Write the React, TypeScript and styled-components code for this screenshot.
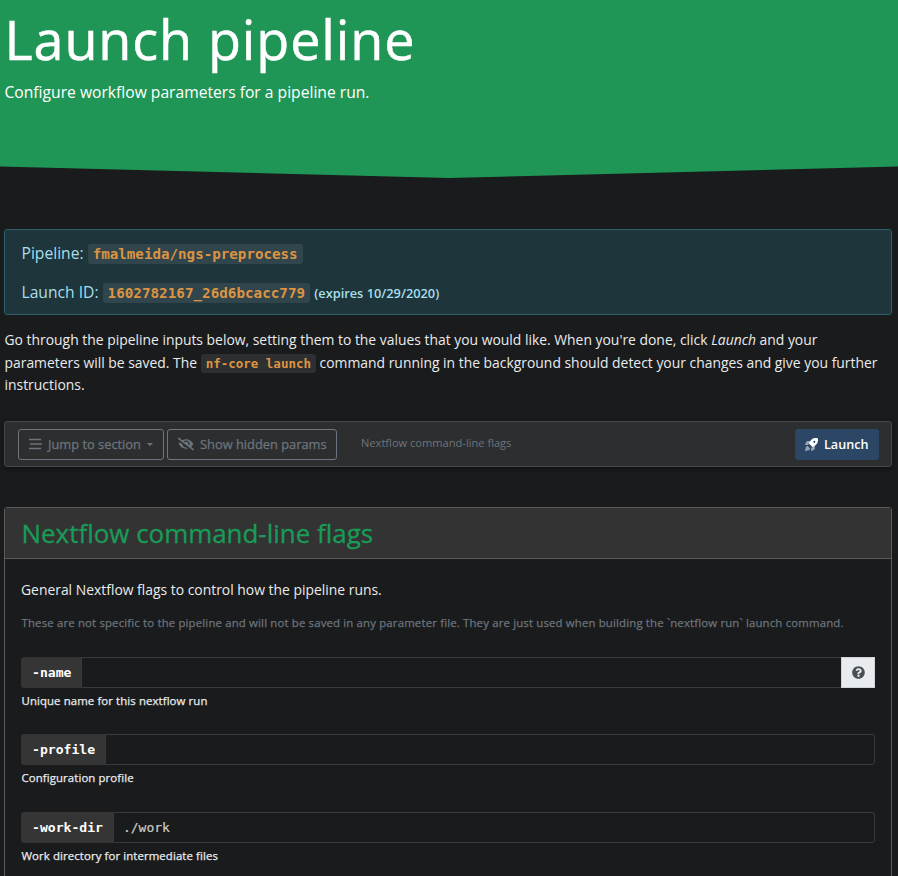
import React from 'react';
import styled, { createGlobalStyle } from 'styled-components';
import { FaEyeSlash, FaQuestionCircle } from 'react-icons/fa';

const sans = `'Open Sans', 'Noto Sans', sans-serif`;
const mono = `'DejaVu Sans Mono', 'Liberation Mono', monospace`;

const GlobalStyle = createGlobalStyle`
  *, *::before, *::after { box-sizing: border-box; }
  html, body { margin: 0; background: #1a1b1c; }
  body {
    height: 876px;
    overflow: hidden;
    font-family: ${sans};
    font-size: 13.9px;
    line-height: 22.5px;
    color: #e9ebed;
  }
  p, h1, h2 { margin: 0; font-weight: 400; }
`;

const Hero = styled.header`
  height: 178px;
  padding: 0 4.5px;
  background: #1f9655;
  color: #fff;
  clip-path: polygon(0 0, 100% 0, 100% 166.5px, 50% 178px, 0 166.5px);
`;

const Title = styled.h1`
  height: 80px;
  font-size: 54px;
  line-height: 78px;
  letter-spacing: 0.85px;
  -webkit-text-stroke: 0.5px currentColor;
  white-space: nowrap;
`;

const Lead = styled.p`
  font-size: 15.65px;
  line-height: 24px;
`;

const Main = styled.main`
  display: flex;
  flex-direction: column;
  padding: 51px 6px 0 4px;
`;

const InfoAlert = styled.section`
  display: flex;
  flex-direction: column;
  gap: 15px;
  height: 86px;
  padding: 11px 16.5px;
  border: 1px solid #2b616b;
  border-radius: 3px;
  background: #1e353b;
  color: #a7dfeb;
`;

const InfoLine = styled.p`
  font-size: 15.65px;
  line-height: 24px;
  white-space: nowrap;
`;

const Code = styled.code<{ $size: number }>`
  padding: 2px 5px;
  border-radius: 3px;
  background: rgba(222, 226, 230, 0.1);
  color: #dc9442;
  font: 700 ${(p) => p.$size}px ${mono};
`;

const Expiry = styled.small`
  font-size: 12.8px;
  font-weight: 600;
`;

const Intro = styled.p`
  margin-top: 14px;
  padding-left: 0.5px;
  white-space: nowrap;
`;

const Toolbar = styled.nav`
  display: flex;
  align-items: center;
  height: 46px;
  margin-top: 24px;
  padding: 1px 12px 0 13px;
  border: 1px solid #46484a;
  border-radius: 3px;
  background: #2d2e30;
  box-shadow: 0 2px 4px rgba(0, 0, 0, 0.4);
`;

const Button = styled.button<{ $primary?: boolean; $width: number }>`
  display: flex;
  align-items: center;
  width: ${(p) => p.$width}px;
  height: 31px;
  margin-right: 3px;
  padding: 0 9px;
  border: 1px solid ${(p) => (p.$primary ? '#2c4766' : '#6c7680')};
  border-radius: 3px;
  background: ${(p) => (p.$primary ? '#2c4766' : 'transparent')};
  color: ${(p) => (p.$primary ? '#fff' : '#6c757d')};
  font: ${(p) => (p.$primary ? '600 12.6px' : '400 12.85px')} ${sans};
  -webkit-text-stroke: ${(p) => (p.$primary ? 0 : 0.25)}px currentColor;
  white-space: nowrap;

  svg { flex: none; margin-right: 6px; }
  &:last-child { margin: 0 0 0 auto; }
`;

const HiddenIcon = styled(FaEyeSlash)`
  margin-left: 1px;
`;

const Caret = styled.span`
  margin-left: 6px;
  border: 3px solid transparent;
  border-top-color: currentColor;
  border-bottom: 0;
`;

const CurrentSection = styled.span`
  margin: -2px 0 0 21px;
  color: #6c757d;
  font-size: 11.1px;
`;

const Card = styled.section`
  height: 420px;
  margin-top: 40px;
  border: 1px solid #5a5b5c;
  border-radius: 3px;
`;

const CardTitle = styled.h2`
  height: 51px;
  padding: 0 16.5px;
  border-bottom: 1px solid #5a5b5c;
  background: #333;
  color: #1a9b57;
  font-size: 25.95px;
  line-height: 51px;
  -webkit-text-stroke: 0.3px currentColor;
`;

const CardBody = styled.div`
  padding: 20px 16px;
`;

const Muted = styled.p`
  margin: 11px 0 22px;
  padding-left: 0.5px;
  color: #6c757d;
  font-size: 11.4px;
  letter-spacing: 0.16px;
  -webkit-text-stroke: 0.25px currentColor;
  white-space: nowrap;
`;

const Field = styled.div`
  height: 77.5px;
`;

const InputGroup = styled.label`
  display: flex;
  height: 31px;
`;

const Flag = styled.span`
  display: flex;
  align-items: center;
  padding: 0 10px 0 11px;
  border-radius: 3px 0 0 3px;
  background: #353535;
  color: #fff;
  font: 700 13.1px ${mono};
`;

const Input = styled.input<{ $joined: boolean }>`
  flex: 1;
  min-width: 0;
  padding: 0 9px;
  border: 1px solid #343b43;
  border-right-width: ${(p) => (p.$joined ? 0 : 1)}px;
  border-radius: ${(p) => (p.$joined ? '0' : '0 3px 3px 0')};
  outline: 0;
  background: transparent;
  color: #cfcdc4;
  font: 13px ${mono};
  -webkit-text-stroke: 0.2px currentColor;
`;

const HelpButton = styled.button`
  display: grid;
  place-items: center;
  width: 34px;
  padding: 0;
  border: 1px solid #ced4da;
  background: #e9ecef;
  color: #495057;
`;

const HelpText = styled.p`
  margin-top: 4px;
  padding-left: 0.5px;
  font-size: 11.4px;
  letter-spacing: 0.1px;
  line-height: 18px;
  -webkit-text-stroke: 0.25px currentColor;
`;

const StreamIcon = () => (
  <svg width="14" height="12" viewBox="0 0 14 12" stroke="currentColor" strokeWidth="1.4">
    <path d="M1 1.5h12M2 6h12M1 10.5h12" />
  </svg>
);

const RocketIcon = () => (
  <svg width="13" height="13" viewBox="0 0 512 512" fill="currentColor">
    <path
      fillRule="evenodd"
      d="M505 19c-1-6-6-11-12-12-132-28-212 14-284 113l-64 91 156 156 91-64c99-72 141-152 113-284zM368 192a40 40 0 1 1 0-80 40 40 0 0 1 0 80z"
    />
    <path
      opacity=".5"
      d="M209 120H95c-14 0-31 10-38 23L4 248c-7 13 0 24 14 24h100zM392 303v114c0 14-10 31-23 38l-105 53c-13 7-24 0-24-14V394zM112 320c-40-3-74 20-83 60-9 41-29 90-29 132 42 0 90-18 132-28 40-10 64-42 60-84z"
    />
  </svg>
);

const fields = [
  { flag: '-name', value: '', help: 'Unique name for this nextflow run', info: true },
  { flag: '-profile', value: '', help: 'Configuration profile', info: false },
  { flag: '-work-dir', value: './work', help: 'Work directory for intermediate files', info: false },
];

export default function App() {
  return (
    <>
      <GlobalStyle />
      <Hero>
        <Title>Launch pipeline</Title>
        <Lead>Configure workflow parameters for a pipeline run.</Lead>
      </Hero>
      <Main>
        <InfoAlert>
          <InfoLine>
            Pipeline: <Code $size={14.2}>fmalmeida/ngs-preprocess</Code>
          </InfoLine>
          <InfoLine>
            Launch ID: <Code $size={14.27}>1602782167_26d6bcacc779</Code>{' '}
            <Expiry>(expires 10/29/2020)</Expiry>
          </InfoLine>
        </InfoAlert>
        <Intro>
          Go through the pipeline inputs below, setting them to the values that you would like. When
          you're done, click <em>Launch</em> and your
          <br />
          parameters will be saved. The <Code $size={12.5}>nf-core launch</Code> command running in
          the background should detect your changes and give you further
          <br />
          instructions.
        </Intro>
        <Toolbar>
          <Button $width={146}>
            <StreamIcon />
            Jump to section
            <Caret />
          </Button>
          <Button $width={170}>
            <HiddenIcon size={16} />
            Show hidden params
          </Button>
          <CurrentSection>Nextflow command-line flags</CurrentSection>
          <Button $primary $width={84}>
            <RocketIcon />
            Launch
          </Button>
        </Toolbar>
        <Card>
          <CardTitle>Nextflow command-line flags</CardTitle>
          <CardBody>
            <p>General Nextflow flags to control how the pipeline runs.</p>
            <Muted>
              These are not specific to the pipeline and will not be saved in any parameter file.
              They are just used when building the `nextflow run` launch command.
            </Muted>
            {fields.map(({ flag, value, help, info }) => (
              <Field key={flag}>
                <InputGroup>
                  <Flag>{flag}</Flag>
                  <Input $joined={info} defaultValue={value} />
                  {info && (
                    <HelpButton aria-label="Help">
                      <FaQuestionCircle size={13} />
                    </HelpButton>
                  )}
                </InputGroup>
                <HelpText>{help}</HelpText>
              </Field>
            ))}
          </CardBody>
        </Card>
      </Main>
    </>
  );
}
